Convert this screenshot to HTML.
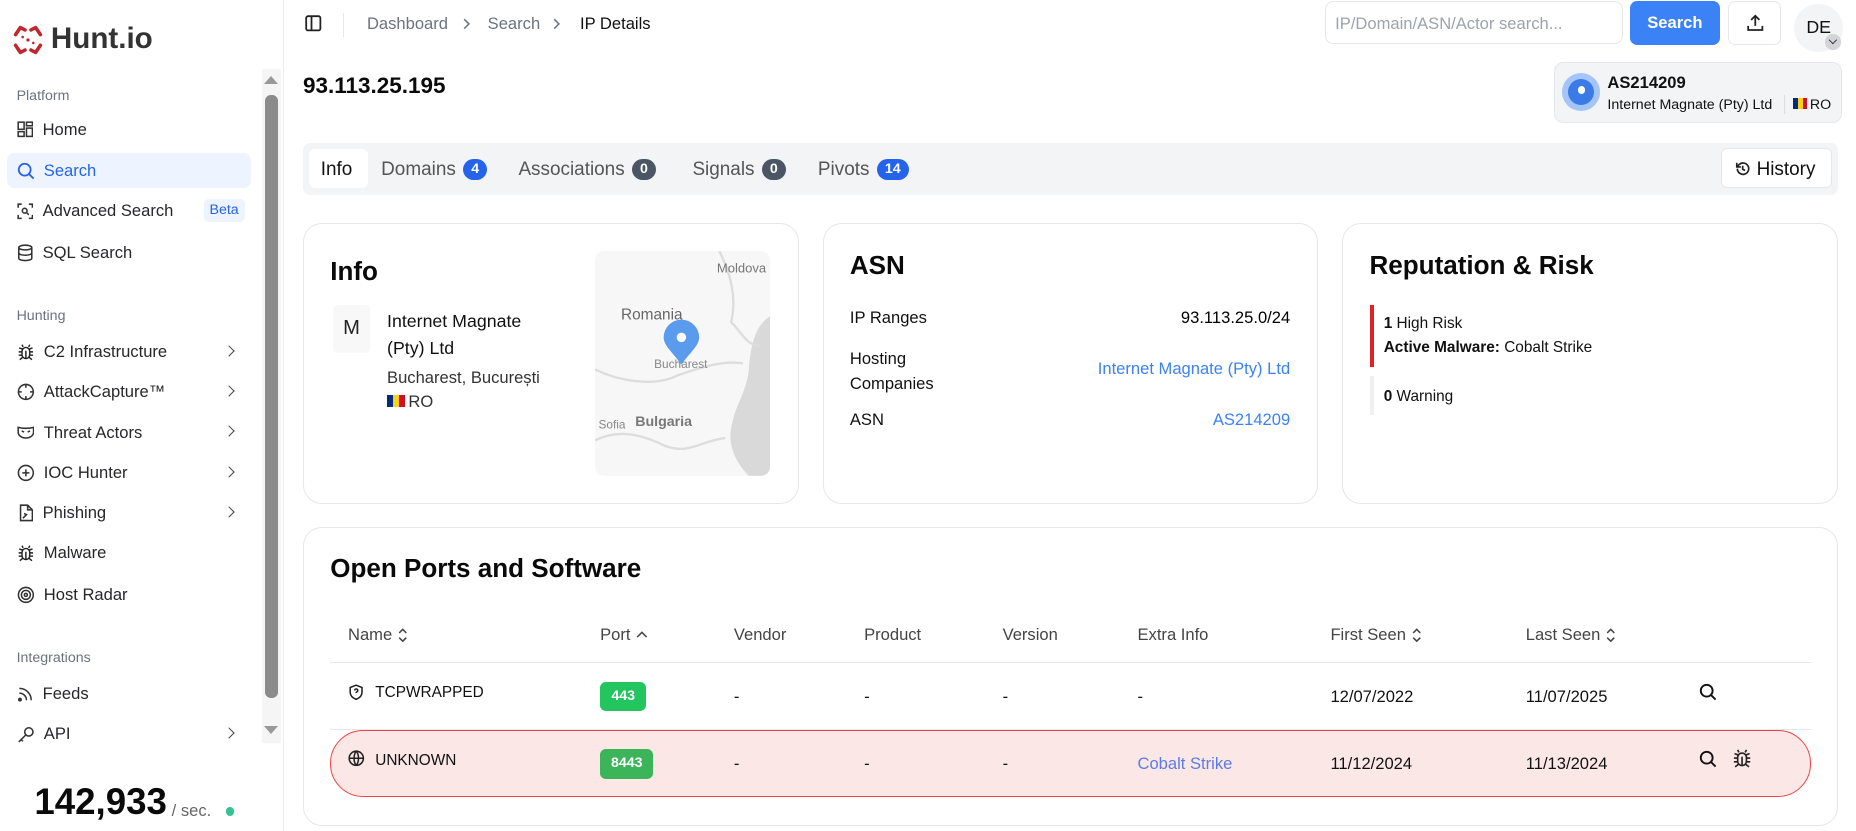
<!DOCTYPE html>
<html><head><meta charset="utf-8">
<style>
html,body{margin:0;padding:0;background:#fff;overflow:hidden}
body{width:1856px;height:831px}
#z{zoom:1.18367;width:1568px;height:702px;position:relative;font-family:"Liberation Sans",Arial,sans-serif;color:#111;font-size:14px}
.a{position:absolute;white-space:nowrap}
.lbl{font-size:12px;color:#6b7280}
.it{font-size:14px;color:#27272a;display:flex;align-items:center;gap:8px}
.chev{position:absolute;left:190px;width:6px;height:6px;border-right:1.5px solid #444;border-top:1.5px solid #444;transform:rotate(45deg)}
.card{position:absolute;border:1px solid #e5e7eb;border-radius:16px;background:#fff}
.h2{font-size:22px;font-weight:bold;color:#0a0a0a}
.badge{display:inline-block;color:#fff;font-size:12px;font-weight:bold;border-radius:10px;padding:2px 7px;margin-left:6px;vertical-align:1px}
.tab{position:absolute;top:134px;font-size:16px;color:#555}
.th{position:absolute;top:528px;font-size:14px;color:#444;display:flex;align-items:center;gap:5px}
.td{position:absolute;font-size:14px;color:#111}
.port{position:absolute;color:#fff;font-size:12px;font-weight:bold;border-radius:5px;text-align:center;line-height:25px;height:25px}
svg{display:block}
</style></head><body><div id="z">
<svg width="0" height="0" style="position:absolute"><defs>
<symbol id="bug" viewBox="0 0 16 16"><g fill="none" stroke="#222" stroke-width="1.3"><path d="M5.5 3.5 4.5 1.5M10.5 3.5l1-2"/><rect x="4.5" y="4" width="7" height="10" rx="3.5"/><path d="M8 7v7M4.5 8H1.5M11.5 8h3M4.5 11H1.5M11.5 11h3M5 5.5 2 4.5M11 5.5l3-1M5 13l-2.5 2M11 13l2.5 2"/></g></symbol>
<symbol id="ud" viewBox="0 0 8 14"><path d="M1 5l3-3 3 3M1 9l3 3 3-3" fill="none" stroke="#444" stroke-width="1.3"/></symbol>
</defs></svg>
<!-- sidebar -->
<div class="a" style="left:0;top:0;width:239px;height:702px;border-right:1px solid #ececec"></div>
<svg class="a" style="left:10px;top:20px" width="27" height="27" viewBox="0 0 27 27" fill="none" stroke="#c0262d" stroke-width="3" stroke-linecap="round" stroke-linejoin="round"><path d="M3 9 L7 3 L11 5"/><path d="M16 5 L20 3 L24 9"/><path d="M3 18 L7 24 L11 22"/><path d="M16 22 L20 24 L24 18"/><circle cx="13.5" cy="13.5" r="1.4" fill="#c0262d" stroke="none"/><circle cx="9" cy="11" r="1.1" fill="#c0262d" stroke="none"/><circle cx="18" cy="16" r="1.1" fill="#c0262d" stroke="none"/></svg>
<div class="a" style="left:43px;top:19px;font-size:25px;font-weight:bold;color:#333">Hunt.io</div>
<div class="a lbl" style="left:14px;top:74px">Platform</div>
<div class="a it" style="left:14px;top:101px"><svg width="14" height="14" viewBox="0 0 14 14" fill="none" stroke="#333" stroke-width="1.3"><rect x="1" y="1" width="5" height="6"/><rect x="8" y="1" width="5" height="3"/><rect x="8" y="6" width="5" height="7"/><rect x="1" y="9" width="5" height="4"/></svg>Home</div>
<div class="a" style="left:6px;top:129px;width:206px;height:30px;background:#eef4ff;border-radius:6px"></div>
<div class="a it" style="left:14px;top:136px;color:#2563eb"><svg width="15" height="15" viewBox="0 0 15 15" fill="none" stroke="#2563eb" stroke-width="1.5"><circle cx="6.5" cy="6.5" r="5"/><path d="M10.3 10.3 14 14"/></svg>Search</div>
<div class="a it" style="left:14px;top:170px"><svg width="14" height="14" viewBox="0 0 14 14" fill="none" stroke="#333" stroke-width="1.3"><path d="M1 4V1h3M10 1h3v3M13 10v3h-3M4 13H1v-3"/><circle cx="6.5" cy="6.5" r="2"/><path d="M8 8l2 2"/></svg>Advanced Search</div>
<div class="a" style="left:172px;top:168px;background:#eef4ff;color:#2563eb;font-size:12px;padding:3px 5px;border-radius:4px">Beta</div>
<div class="a it" style="left:14px;top:205px"><svg width="14" height="15" viewBox="0 0 14 15" fill="none" stroke="#333" stroke-width="1.3"><ellipse cx="7" cy="3" rx="5.5" ry="2"/><path d="M1.5 3v9c0 1.1 2.5 2 5.5 2s5.5-.9 5.5-2V3M1.5 7.5c0 1.1 2.5 2 5.5 2s5.5-.9 5.5-2"/></svg>SQL Search</div>
<div class="a lbl" style="left:14px;top:260px">Hunting</div>
<div class="a it" style="left:14px;top:289px"><svg width="15" height="15"><use href="#bug"/></svg>C2 Infrastructure</div><div class="chev" style="top:293px"></div>
<div class="a it" style="left:14px;top:323px"><svg width="15" height="15" viewBox="0 0 15 15" fill="none" stroke="#333" stroke-width="1.3"><circle cx="7.5" cy="7.5" r="6.3"/><path d="M7.5 1v3M7.5 11v3M1 7.5h3M11 7.5h3"/></svg>AttackCapture™</div><div class="chev" style="top:327px"></div>
<div class="a it" style="left:14px;top:357px"><svg width="15" height="12" viewBox="0 0 15 12" fill="none" stroke="#333" stroke-width="1.3"><path d="M1 2c4 1 9 1 13 0v4c0 3-3 5-6.5 5S1 9 1 6z"/><path d="M4 5l2 1M11 5l-2 1"/></svg>Threat Actors</div><div class="chev" style="top:361px"></div>
<div class="a it" style="left:14px;top:391px"><svg width="15" height="15" viewBox="0 0 15 15" fill="none" stroke="#333" stroke-width="1.3"><circle cx="7.5" cy="7.5" r="6.3"/><path d="M7.5 4.5v6M4.5 7.5h6"/></svg>IOC Hunter</div><div class="chev" style="top:395px"></div>
<div class="a it" style="left:14px;top:425px"><svg width="14" height="15" viewBox="0 0 14 15" fill="none" stroke="#333" stroke-width="1.3"><path d="M3 1h6l4 4v9H3zM9 1v4h4M6 8l2 1-3 3"/></svg>Phishing</div><div class="chev" style="top:429px"></div>
<div class="a it" style="left:14px;top:459px"><svg width="15" height="15"><use href="#bug"/></svg>Malware</div>
<div class="a it" style="left:14px;top:494px"><svg width="15" height="15" viewBox="0 0 15 15" fill="none" stroke="#333" stroke-width="1.3"><circle cx="7.5" cy="7.5" r="6.3"/><circle cx="7.5" cy="7.5" r="3.8"/><circle cx="7.5" cy="7.5" r="1.3"/></svg>Host Radar</div>
<div class="a lbl" style="left:14px;top:549px">Integrations</div>
<div class="a it" style="left:14px;top:578px"><svg width="14" height="14" viewBox="0 0 14 14" fill="none" stroke="#333" stroke-width="1.3"><path d="M2 2a10 10 0 0 1 10 10M2 6a6 6 0 0 1 6 6"/><circle cx="2.5" cy="11.5" r="1" fill="#333"/></svg>Feeds</div>
<div class="a it" style="left:14px;top:612px"><svg width="15" height="15" viewBox="0 0 15 15" fill="none" stroke="#333" stroke-width="1.3"><circle cx="10" cy="5" r="3.5"/><path d="M7.5 7.5 1.5 13.5M3.5 11.5l1.5 1.5"/></svg>API</div><div class="chev" style="top:616px"></div>
<!-- scrollbar -->
<div class="a" style="left:221px;top:58px;width:16px;height:570px;background:#f5f5f5"></div>
<div class="a" style="left:223px;top:64px;width:0;height:0;border-left:6px solid transparent;border-right:6px solid transparent;border-bottom:7px solid #999"></div>
<div class="a" style="left:223px;top:613px;width:0;height:0;border-left:6px solid transparent;border-right:6px solid transparent;border-top:7px solid #999"></div>
<div class="a" style="left:224px;top:80px;width:11px;height:510px;background:#8b8b8b;border-radius:5px"></div>
<div class="a" style="left:29px;top:660px;font-size:31px;font-weight:bold;color:#0a0a0a">142,933</div>
<div class="a" style="left:145px;top:677px;font-size:14px;color:#666">/ sec.</div>
<div class="a" style="left:191px;top:682px;width:7px;height:7px;border-radius:50%;background:#34c38f"></div>
<!-- top bar -->
<svg class="a" style="left:258px;top:13px" width="14" height="14" viewBox="0 0 14 14" fill="none" stroke="#222" stroke-width="1.5"><rect x="1" y="1" width="12" height="12" rx="1.5"/><path d="M5.5 1v12"/></svg>
<div class="a" style="left:290px;top:11px;width:1px;height:20px;background:#e5e7eb"></div>
<div class="a" style="left:310px;top:12px;font-size:14px;color:#6b7280">Dashboard</div>
<svg class="a" style="left:391px;top:15px" width="6" height="10" viewBox="0 0 6 10"><path d="M1 1l4 4-4 4" fill="none" stroke="#6b7280" stroke-width="1.3"/></svg>
<div class="a" style="left:412px;top:12px;font-size:14px;color:#6b7280">Search</div>
<svg class="a" style="left:467px;top:15px" width="6" height="10" viewBox="0 0 6 10"><path d="M1 1l4 4-4 4" fill="none" stroke="#6b7280" stroke-width="1.3"/></svg>
<div class="a" style="left:490px;top:12px;font-size:14px;color:#111">IP Details</div>
<div class="a" style="left:1119px;top:1px;width:252px;height:36px;border:1px solid #e5e7eb;border-radius:7px;box-sizing:border-box"></div>
<div class="a" style="left:1128px;top:12px;font-size:14px;color:#9ca3af">IP/Domain/ASN/Actor search...</div>
<div class="a" style="left:1377px;top:1px;width:76px;height:37px;background:#3b82f6;border-radius:6px;color:#fff;font-weight:bold;font-size:14px;text-align:center;line-height:37px">Search</div>
<div class="a" style="left:1460px;top:1px;width:45px;height:37px;border:1px solid #e5e7eb;border-radius:6px;box-sizing:border-box"></div>
<svg class="a" style="left:1476px;top:12px" width="14" height="15" viewBox="0 0 14 15" fill="none" stroke="#222" stroke-width="1.5"><path d="M7 10V1.5M3.5 5 7 1.5 10.5 5M1 10v3.5h12V10"/></svg>
<div class="a" style="left:1516px;top:3px;width:41px;height:41px;border-radius:50%;background:#f3f4f6;font-size:15px;text-align:center;line-height:40px;color:#111">DE</div>
<div class="a" style="left:1542px;top:29px;width:13px;height:13px;border-radius:50%;background:#d4d4d8"></div>
<div class="a" style="left:1546px;top:31px;width:4px;height:4px;border-right:1.2px solid #333;border-bottom:1.2px solid #333;transform:rotate(45deg)"></div>
<!-- title row -->
<div class="a" style="left:256px;top:62px;font-size:19px;font-weight:bold;color:#0a0a0a">93.113.25.195</div>
<div class="a" style="left:1313px;top:52px;width:243px;height:52px;background:#f3f4f6;border:1px solid #e5e7eb;border-radius:8px;box-sizing:border-box"></div>
<div class="a" style="left:1320px;top:62px;width:32px;height:32px;border-radius:50%;background:#a5c4f8"></div>
<div class="a" style="left:1325px;top:67px;width:22px;height:22px;border-radius:50%;background:#3b7be8"></div>
<div class="a" style="left:1333px;top:73px;width:6px;height:6px;border-radius:50%;background:#fff"></div>
<div class="a" style="left:1358px;top:62px;font-size:14px;font-weight:bold">AS214209</div>
<div class="a" style="left:1358px;top:82px;font-size:12px">Internet Magnate (Pty) Ltd</div>
<div class="a" style="left:1507px;top:80px;width:1px;height:16px;background:#ddd"></div>
<div class="a" style="left:1515px;top:83px;width:4px;height:9px;background:#002b7f"></div><div class="a" style="left:1519px;top:83px;width:4px;height:9px;background:#fcd116"></div><div class="a" style="left:1523px;top:83px;width:4px;height:9px;background:#ce1126"></div>
<div class="a" style="left:1529px;top:82px;font-size:12px">RO</div>
<!-- tabs -->
<div class="a" style="left:256px;top:121px;width:1297px;height:44px;background:#f3f4f6;border-radius:6px"></div>
<div class="a" style="left:261px;top:126px;width:50px;height:33px;background:#fff;border-radius:5px"></div>
<div class="tab" style="left:271px;color:#111">Info</div>
<div class="tab" style="left:322px">Domains<span class="badge" style="background:#2563eb">4</span></div>
<div class="tab" style="left:438px">Associations<span class="badge" style="background:#4b5563">0</span></div>
<div class="tab" style="left:585px">Signals<span class="badge" style="background:#4b5563">0</span></div>
<div class="tab" style="left:691px">Pivots<span class="badge" style="background:#2563eb">14</span></div>
<div class="a" style="left:1454px;top:125px;width:94px;height:34px;background:#fff;border:1px solid #e5e7eb;border-radius:5px;box-sizing:border-box"></div>
<svg class="a" style="left:1466px;top:136px" width="13" height="13" viewBox="0 0 13 13" fill="none" stroke="#222" stroke-width="1.4"><path d="M2 6.5a4.8 4.8 0 1 0 1.4-3.4L1.5 5M1.5 1.5V5H5"/><path d="M6.5 4v3l2 1"/></svg>
<div class="a" style="left:1484px;top:134px;font-size:16px;color:#111">History</div>
<!-- cards -->
<div class="card" style="left:256px;top:188px;width:417px;height:236px"></div>
<div class="card" style="left:695px;top:188px;width:417px;height:236px"></div>
<div class="card" style="left:1134px;top:188px;width:417px;height:236px"></div>
<div class="a h2" style="left:279px;top:216px">Info</div>
<div class="a" style="left:281px;top:258px;width:32px;height:40px;background:#f8f8f8;border-radius:4px;text-align:center;line-height:40px;font-size:17px;color:#222">M</div>
<div class="a" style="left:327px;top:260px;font-size:15px;line-height:23px;color:#111">Internet Magnate<br>(Pty) Ltd</div>
<div class="a" style="left:327px;top:311px;font-size:14px;color:#333">Bucharest, București</div>
<div class="a" style="left:327px;top:334px;width:5px;height:10px;background:#002b7f"></div><div class="a" style="left:332px;top:334px;width:5px;height:10px;background:#fcd116"></div><div class="a" style="left:337px;top:334px;width:5px;height:10px;background:#ce1126"></div>
<div class="a" style="left:345px;top:331px;font-size:14px;color:#333">RO</div>
<!-- map -->
<svg class="a" style="left:503px;top:212px" width="148" height="190" viewBox="0 0 148 190">
<defs><clipPath id="c"><rect width="148" height="190" rx="8"/></clipPath></defs>
<g clip-path="url(#c)">
<rect width="148" height="190" fill="#f7f7f7"/>
<path d="M148 55 C140 60 132 70 130 100 C128 120 118 130 115 150 C112 165 120 180 130 190 L148 190Z" fill="#d9d9d9"/>
<path d="M0 100 C20 110 50 115 70 105 C90 98 110 92 125 95" fill="none" stroke="#ddd" stroke-width="2"/>
<path d="M0 160 C20 150 40 155 60 165 C80 172 90 160 110 158" fill="none" stroke="#ddd" stroke-width="2"/>
<path d="M105 0 C115 20 120 40 115 60 C125 70 128 80 140 80" fill="none" stroke="#ddd" stroke-width="2"/>
<text x="103" y="18" font-family="Liberation Sans" font-size="11" fill="#777">Moldova</text>
<text x="22" y="58" font-family="Liberation Sans" font-size="13" fill="#666">Romania</text>
<text x="50" y="99" font-family="Liberation Sans" font-size="10" fill="#888">Bucharest</text>
<text x="3" y="150" font-family="Liberation Sans" font-size="10" fill="#888">Sofia</text>
<text x="34" y="148" font-family="Liberation Sans" font-size="12" font-weight="bold" fill="#777">Bulgaria</text>
<path d="M73 96 C66 86 58 80 58 73 A15 15 0 0 1 88 73 C88 80 80 86 73 96Z" fill="#5b9bed"/>
<circle cx="73" cy="73" r="4" fill="#fff"/>
</g></svg>
<div class="a h2" style="left:718px;top:211px">ASN</div>
<div class="a" style="left:718px;top:260px">IP Ranges</div>
<div class="a" style="left:1090px;top:260px;transform:translateX(-100%);color:#000">93.113.25.0/24</div>
<div class="a" style="left:718px;top:293px;line-height:21px">Hosting<br>Companies</div>
<div class="a" style="left:1090px;top:303px;transform:translateX(-100%);color:#3b82f6">Internet Magnate (Pty) Ltd</div>
<div class="a" style="left:718px;top:346px">ASN</div>
<div class="a" style="left:1090px;top:346px;transform:translateX(-100%);color:#3b82f6">AS214209</div>
<div class="a h2" style="left:1157px;top:211px">Reputation &amp; Risk</div>
<div class="a" style="left:1157px;top:258px;width:4px;height:52px;background:#dc2626"></div>
<div class="a" style="left:1169px;top:266px;font-size:13px"><b>1</b> High Risk</div>
<div class="a" style="left:1169px;top:286px;font-size:13px"><b>Active Malware:</b> Cobalt Strike</div>
<div class="a" style="left:1157px;top:318px;width:4px;height:33px;background:#f0f0f0"></div>
<div class="a" style="left:1169px;top:328px;font-size:13px"><b>0</b> Warning</div>
<!-- ports -->
<div class="card" style="left:256px;top:445px;width:1295px;height:251px"></div>
<div class="a h2" style="left:279px;top:467px">Open Ports and Software</div>
<div class="th" style="left:294px">Name <svg width="8" height="14"><use href="#ud"/></svg></div>
<div class="th" style="left:507px">Port <svg width="10" height="8" viewBox="0 0 10 8"><path d="M1 6l4-4 4 4" fill="none" stroke="#444" stroke-width="1.3"/></svg></div>
<div class="th" style="left:620px">Vendor</div>
<div class="th" style="left:730px">Product</div>
<div class="th" style="left:847px">Version</div>
<div class="th" style="left:961px">Extra Info</div>
<div class="th" style="left:1124px">First Seen <svg width="8" height="14"><use href="#ud"/></svg></div>
<div class="th" style="left:1289px">Last Seen <svg width="8" height="14"><use href="#ud"/></svg></div>
<div class="a" style="left:279px;top:559px;width:1251px;height:1px;background:#e5e7eb"></div>
<div class="a" style="left:279px;top:616px;width:1251px;height:1px;background:#e5e7eb"></div>
<svg class="a" style="left:295px;top:578px" width="12" height="14" viewBox="0 0 12 14" fill="none" stroke="#222" stroke-width="1.3"><path d="M6 1 11 3v4c0 3-2.5 5-5 6-2.5-1-5-3-5-6V3z"/><path d="M4.8 5.5a1.3 1.3 0 1 1 1.8 1.2c-.4.2-.6.5-.6.9M6 9.6v.1"/></svg>
<div class="td" style="left:317px;top:578px;font-size:13px">TCPWRAPPED</div>
<div class="port" style="left:507px;top:576px;width:39px;background:#22c55e">443</div>
<div class="td" style="left:620px;top:580px">-</div><div class="td" style="left:730px;top:580px">-</div><div class="td" style="left:847px;top:580px">-</div><div class="td" style="left:961px;top:580px">-</div>
<div class="td" style="left:1124px;top:580px">12/07/2022</div>
<div class="td" style="left:1289px;top:580px">11/07/2025</div>
<svg class="a" style="left:1435px;top:577px" width="15" height="15" viewBox="0 0 15 15" fill="none" stroke="#111" stroke-width="1.6"><circle cx="6.5" cy="6.5" r="5"/><path d="M10.3 10.3 14 14"/></svg>
<div class="a" style="left:279px;top:617px;width:1251px;height:56px;background:#fce7e7;border:1px solid #ef4444;border-radius:28px;box-sizing:border-box"></div>
<svg class="a" style="left:294px;top:634px" width="14" height="14" viewBox="0 0 14 14" fill="none" stroke="#222" stroke-width="1.3"><circle cx="7" cy="7" r="6"/><path d="M1 7h12M7 1c-2.5 3-2.5 9 0 12M7 1c2.5 3 2.5 9 0 12"/></svg>
<div class="td" style="left:317px;top:635px;font-size:13px">UNKNOWN</div>
<div class="port" style="left:507px;top:633px;width:45px;background:#3cb55a">8443</div>
<div class="td" style="left:620px;top:637px">-</div><div class="td" style="left:730px;top:637px">-</div><div class="td" style="left:847px;top:637px">-</div>
<div class="td" style="left:961px;top:637px;color:#5b7be8">Cobalt Strike</div>
<div class="td" style="left:1124px;top:637px">11/12/2024</div>
<div class="td" style="left:1289px;top:637px">11/13/2024</div>
<svg class="a" style="left:1435px;top:634px" width="15" height="15" viewBox="0 0 15 15" fill="none" stroke="#111" stroke-width="1.6"><circle cx="6.5" cy="6.5" r="5"/><path d="M10.3 10.3 14 14"/></svg>
<svg class="a" style="left:1463px;top:632px" width="17" height="17"><use href="#bug"/></svg>
</div></body></html>
